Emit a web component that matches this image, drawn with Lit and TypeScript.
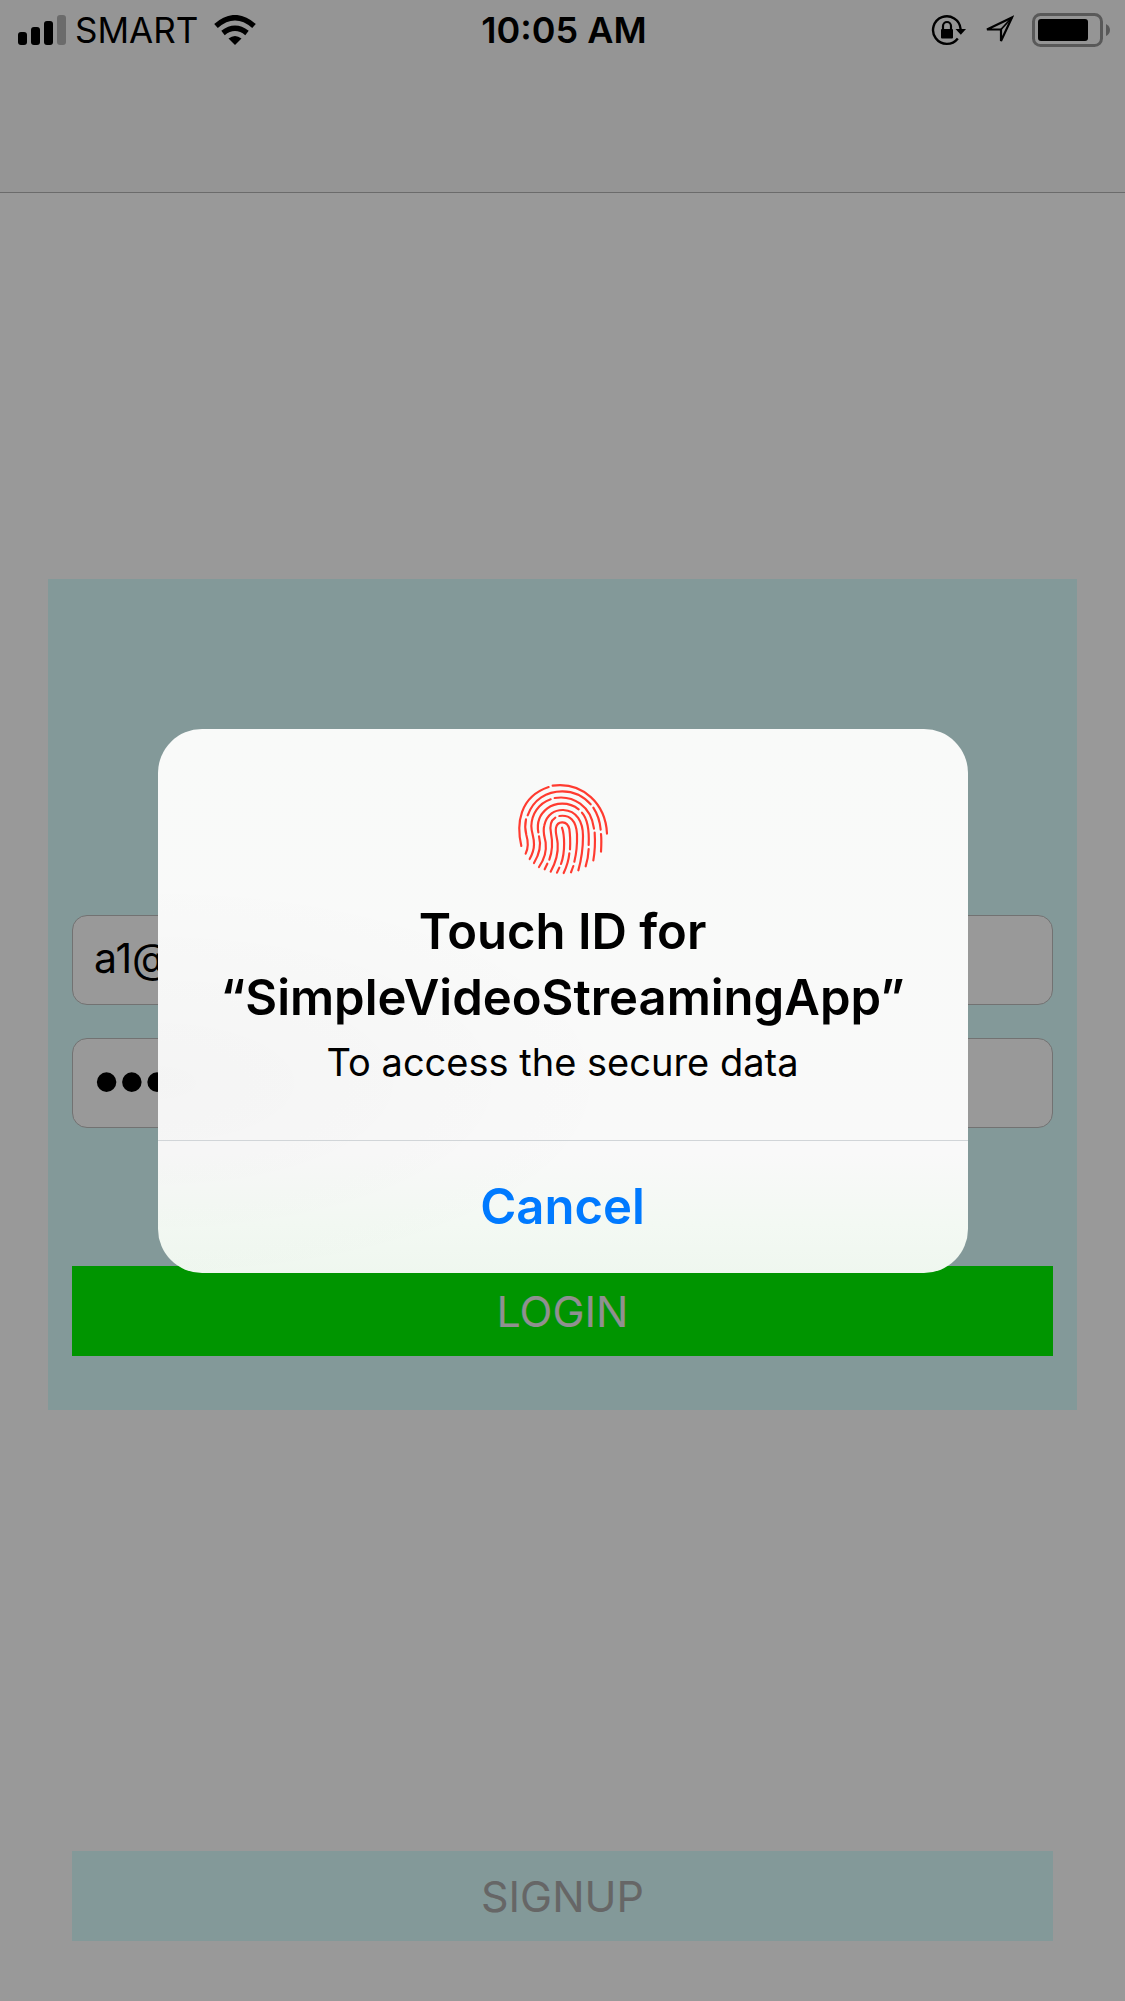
import { LitElement, html, css, svg } from "lit";
import { customElement, state } from "lit/decorators.js";

const RIDGES = [
  "M49 225C34 160 42 78 131 48",
  "M143 44C235 32 302 100 306 188",
  "M68 133C85 85 125 61 172 61C205 61 235 75 257 100",
  "M265 110C278 130 285 152 287 176",
  "M288 189C290 208 289 225 288 242",
  "M63 145C59 163 60 177 64 192C71 215 69 233 62 248",
  "M137 85C100 98 80 130 79 165C79 185 88 200 87 220C87 238 82 250 74 264",
  "M149 81C205 72 258 105 267 173",
  "M269 185C271 215 270 240 265 268",
  "M221 115C192 91 150 94 127 112C101 132 95 156 100 184",
  "M102 196C110 226 103 250 87 276",
  "M231 125C249 145 253 180 251 222",
  "M251 234C250 255 247 270 242 286",
  "M102 288C118 265 125 240 122 215C120 200 112 185 118 163C125 130 150 116 175 117C215 119 234 152 234 195C234 240 228 270 220 298",
  "M151 140C135 150 134 167 138 187C144 217 141 244 133 266",
  "M127 278L119 295",
  "M163 135C195 130 214 150 216 190C217 222 214 248 208 272",
  "M205 285L198 304",
  "M137 302C152 275 160 245 158 218C157 200 150 185 153 170C158 148 187 148 193 174C196 195 196 215 195 235",
  "M193 247C191 268 185 287 176 306",
  "M171 170C178 190 182 240 168 279",
  "M163 290L156 305",
];

@customElement("status-bar")
export class StatusBar extends LitElement {
  static styles = css`
    :host {
      display: grid;
      grid-template-columns: 1fr auto 1fr;
      align-items: center;
      height: 60px;
      padding: 0 15px 0 18px;
      font-size: 35px;
      line-height: 60px;
      color: #000;
    }
    .side {
      display: flex;
      align-items: center;
    }
    .carrier {
      padding: 0 16px 0 9px;
    }
    .time {
      font-size: 36px;
      font-weight: 600;
    }
    .end {
      justify-content: flex-end;
      gap: 18px;
    }
    svg {
      display: block;
    }
  `;

  render() {
    return html`
      <div class="side">
        <svg width="48" height="30" viewBox="0 0 48 30" role="img" aria-label="Signal strength">
          <rect x="0" y="17" width="9" height="13" rx="3" />
          <rect x="13" y="12" width="9" height="18" rx="3" />
          <rect x="26" y="6" width="9" height="24" rx="3" />
          <rect x="39" y="0" width="9" height="30" rx="3" fill-opacity=".28" />
        </svg>
        <span class="carrier">SMART</span>
        <svg width="42" height="30" viewBox="0 0 42 30" role="img" aria-label="Wi-Fi">
          <path d="M21 30L14.500 23.500Q21 18.500 27.500 23.500Z" />
          <path d="M9 18Q21 8.500 33 18" fill="none" stroke="#000" stroke-width="5.500" />
          <path d="M2 11Q21 -5.500 40 11" fill="none" stroke="#000" stroke-width="5.500" />
        </svg>
      </div>
      <time class="time">10:05 AM</time>
      <div class="side end">
        <svg width="36" height="32" viewBox="0 0 36 32" role="img" aria-label="Rotation lock">
          <path d="M27.800 24.500A13.800 13.800 0 1 1 30.600 15" fill="none" stroke="#000" stroke-width="2.400" />
          <path d="M25.500 15H36L30.800 20.800Z" />
          <rect x="11" y="15" width="12" height="9.500" rx="1" />
          <path d="M13 16V12A4 4 0 0 1 21 12V16" fill="none" stroke="#000" stroke-width="2.200" />
        </svg>
        <svg width="30" height="30" viewBox="0 0 30 30" role="img" aria-label="Location">
          <path d="M3 14.500L28 2.500L17 26V14.500Z" fill="none" stroke="#000" stroke-width="2.200" />
          <path d="M16.500 15L28 2.500" fill="none" stroke="#000" stroke-width="1.800" />
        </svg>
        <svg width="78" height="34" viewBox="0 0 78 34" role="img" aria-label="Battery">
          <rect x="1.500" y="1.500" width="68" height="31" rx="7" fill="none" stroke="#000" stroke-opacity=".4" stroke-width="3" />
          <rect x="6" y="6" width="50" height="22" rx="3" />
          <path d="M74 11Q78 13 78 17T74 23Z" fill-opacity=".4" />
        </svg>
      </div>
    `;
  }
}

@customElement("touch-id-alert")
export class TouchIdAlert extends LitElement {
  static styles = css`
    :host {
      display: block;
      width: 72%;
      overflow: hidden;
      border-radius: 44px;
      background:
        radial-gradient(ellipse at 0% 65%, rgb(0 0 0 / 2%), transparent 42%),
        linear-gradient(#f9faf9 0%, #f9f9f9 78%, #f3f9f3 91%, #eff7ef 100%);
      color: #000;
      text-align: center;
    }
    .message {
      display: flex;
      flex-direction: column;
      align-items: center;
      padding: 42px 36px 47px;
    }
    .print {
      display: block;
      margin-bottom: 12px;
    }
    .title {
      margin: 0;
      font-size: 49px;
      font-weight: 600;
      line-height: 66px;
    }
    .reason {
      margin: 0;
      font-size: 38px;
      line-height: 62px;
    }
    .cancel {
      display: block;
      width: 100%;
      height: 133px;
      border: 0;
      border-top: 1px solid #d1d5d8;
      background: none;
      color: #007aff;
      font: inherit;
      font-size: 49px;
      font-weight: 600;
    }
  `;

  private cancel() {
    this.dispatchEvent(new CustomEvent("cancel"));
  }

  render() {
    return html`
      <div class="message">
        <svg class="print" width="116" height="116" viewBox="0 0 348 348" fill="none" stroke="#ff3b30"
          stroke-width="6.500" stroke-linecap="round" aria-hidden="true">
          ${RIDGES.map((d) => svg`<path d=${d} />`)}
        </svg>
        <h1 class="title">Touch ID for<br />“SimpleVideoStreamingApp”</h1>
        <p class="reason">To access the secure data</p>
      </div>
      <button class="cancel" type="button" @click=${this.cancel}>Cancel</button>
    `;
  }
}

@customElement("app-root")
export class AppRoot extends LitElement {
  static styles = css`
    :host {
      display: flex;
      flex-direction: column;
      position: relative;
      min-height: 100vh;
      background: #fff;
      font-family: Inter, "Liberation Sans", sans-serif;
    }
    .bar {
      height: 192px;
      border-bottom: 1px solid #b2b2b2;
      background: #f9f9f9;
    }
    .page {
      display: flex;
      flex: 1;
      flex-direction: column;
      padding: 386px 48px 60px;
    }
    .panel {
      display: flex;
      flex-direction: column;
      padding: 336px 24px 54px;
      background: #dbffff;
    }
    .field {
      box-sizing: border-box;
      width: 100%;
      height: 90px;
      margin: 0 0 33px;
      padding: 0 21px 4px;
      border: 1px solid #bebebe;
      border-radius: 15px;
      background: #fff;
      color: #000;
      font: inherit;
      font-size: 41px;
    }
    .secret {
      font-family: "Liberation Sans", sans-serif;
      font-size: 72px;
    }
    .action {
      height: 90px;
      border: 0;
      font: inherit;
      font-size: 43px;
    }
    .login {
      margin-top: 105px;
      background: #00f900;
      color: #f0f0f0;
    }
    .signup {
      margin: auto 24px 0;
      background: #dbffff;
      color: #aaa;
    }
    .overlay {
      display: flex;
      position: absolute;
      inset: 0;
      align-items: center;
      justify-content: center;
      background: rgb(0 0 0 / 40%);
    }
  `;

  @state() private asking = true;

  private dismiss() {
    this.asking = false;
  }

  render() {
    return html`
      <header class="bar"><status-bar></status-bar></header>
      <main class="page">
        <form class="panel">
          <input class="field" type="text" aria-label="Email" .value=${"a1@a.com"} />
          <input class="field secret" type="password" aria-label="Password" .value=${"secret"} />
          <button class="action login" type="button">LOGIN</button>
        </form>
        <button class="action signup" type="button">SIGNUP</button>
      </main>
      ${this.asking
        ? html`<div class="overlay">
            <touch-id-alert role="alertdialog" aria-label="Touch ID" @cancel=${this.dismiss}></touch-id-alert>
          </div>`
        : null}
    `;
  }
}
